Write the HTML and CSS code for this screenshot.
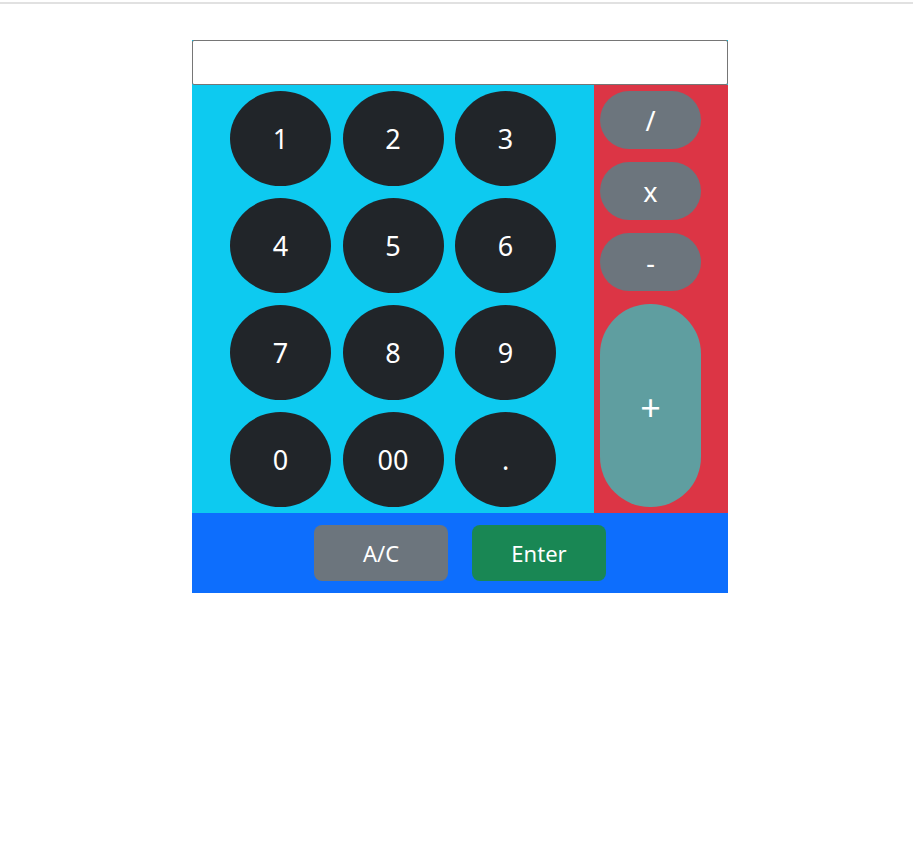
FILE: index.html
```html
<!DOCTYPE html>
<html>
<head>
<meta charset="utf-8">
<link rel="stylesheet" href="styles.css">
</head>
<body>
<div class="topline"></div>
<div class="calc">
  <input class="display" type="text">
  <div class="keys">
    <div class="nums">
      <button class="num">1</button>
      <button class="num">2</button>
      <button class="num">3</button>
      <button class="num">4</button>
      <button class="num">5</button>
      <button class="num">6</button>
      <button class="num">7</button>
      <button class="num">8</button>
      <button class="num">9</button>
      <button class="num">0</button>
      <button class="num">00</button>
      <button class="num">.</button>
    </div>
    <div class="ops">
      <button class="op">/</button>
      <button class="op">x</button>
      <button class="op">-</button>
      <button class="op plus">+</button>
    </div>
  </div>
  <div class="actions">
    <button class="act clear">A/C</button>
    <button class="act enter">Enter</button>
  </div>
</div>
</body>
</html>
```
FILE: styles.css
```css
html, body {
  margin: 0;
  padding: 0;
  background: #fff;
  font-family: "Noto Sans", "Open Sans", sans-serif;
}
.topline {
  margin-top: 2px;
  height: 2px;
  background: #e1e1e1;
}
.calc {
  width: 536px;
  margin: 36px 0 0 192px;
  background: #0dcaf0;
}
.display {
  display: block;
  box-sizing: border-box;
  width: 536px;
  height: 45px;
  margin: 0;
  border: 1px solid #767676;
  border-radius: 2px;
  background: #fff;
}
.keys {
  display: flex;
}
.nums {
  width: 402px;
  box-sizing: border-box;
  padding: 6px 0 6px 38px;
  display: grid;
  grid-template-columns: repeat(3, 101px);
  grid-auto-rows: 95px;
  column-gap: 11.5px;
  row-gap: 12px;
  background: #0dcaf0;
}
button {
  font-family: "Noto Sans", "Open Sans", sans-serif;
  color: #fff;
  border: 0;
  padding: 0;
  margin: 0;
  cursor: pointer;
}
.num {
  width: 101px;
  height: 95px;
  border-radius: 50%;
  background: #212529;
  font-size: 27px;
}
.ops {
  width: 134px;
  box-sizing: border-box;
  padding: 6px;
  display: flex;
  flex-direction: column;
  gap: 13px;
  background: #dc3545;
}
.op {
  width: 101px;
  height: 58px;
  border-radius: 29px;
  background: #6c757d;
  font-size: 27px;
}
.op.plus {
  height: 203px;
  border-radius: 50px;
  background: #5f9ea0;
  font-size: 36px;
  padding-top: 4px;
}
.actions {
  display: flex;
  justify-content: center;
  gap: 24px;
  padding: 12px 0;
  background: #0d6efd;
}
.act {
  width: 134px;
  height: 56px;
  border-radius: 8px;
  font-size: 22px;
}
.clear { background: #6c757d; }
.enter { background: #198754; }
```
